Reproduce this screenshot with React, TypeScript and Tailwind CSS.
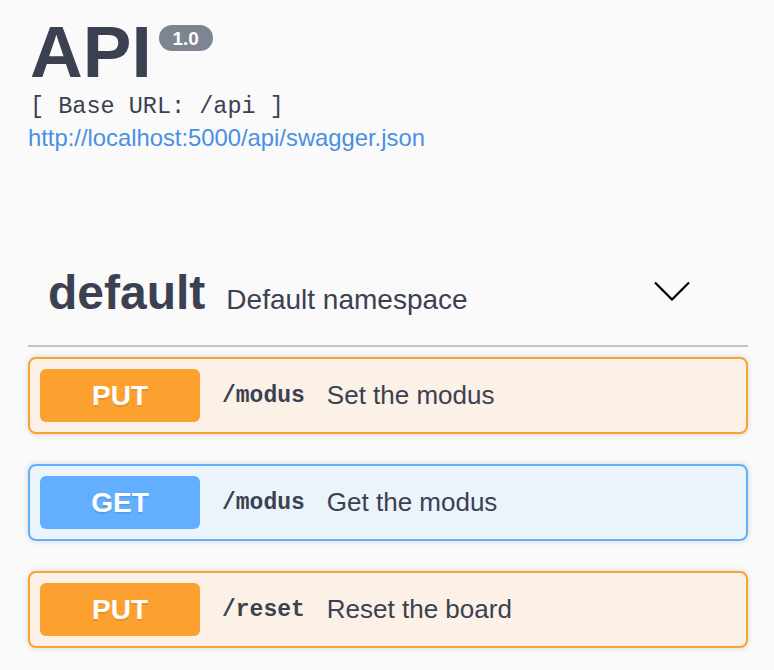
import React from "react"

type Op = {
  method: "PUT" | "GET"
  path: string
  summary: string
}

const ops: Op[] = [
  { method: "PUT", path: "/modus", summary: "Set the modus" },
  { method: "GET", path: "/modus", summary: "Get the modus" },
  { method: "PUT", path: "/reset", summary: "Reset the board" },
]

function blockClass(method: Op["method"]): string {
  if (method === "GET") {
    return "border-[#61affe] bg-[#ebf3fb]"
  }
  return "border-[#fca130] bg-[#fbf1e6]"
}

function badgeClass(method: Op["method"]): string {
  if (method === "GET") {
    return "bg-[#61affe]"
  }
  return "bg-[#fca130]"
}

function ChevronDown(): React.JSX.Element {
  return (
    <svg width="36" height="20" viewBox="0 0 36 20" fill="none" aria-hidden="true">
      <path d="M1 1.5 18 18.5 35 1.5" stroke="#000" strokeWidth="2.2" />
    </svg>
  )
}

function OpBlock({ op }: { op: Op }): React.JSX.Element {
  return (
    <div className={`mb-[30px] flex items-center rounded-[8px] border-2 p-[10px] shadow-[0_0_6px_rgba(0,0,0,0.15)] ${blockClass(op.method)}`}>
      <span
        className={`flex h-[53px] w-[160px] items-center justify-center rounded-[6px] text-[28px] font-bold text-white [text-shadow:0_2px_0_rgba(0,0,0,0.1)] ${badgeClass(op.method)}`}
      >
        {op.method}
      </span>
      <span className="ml-[22px] font-['Liberation_Mono',monospace] text-[23px] font-bold text-[#3b4151]">{op.path}</span>
      <span className="ml-[22px] text-[26px] text-[#3b4151]">{op.summary}</span>
    </div>
  )
}

export default function App(): React.JSX.Element {
  return (
    <div className="min-h-[670px] bg-[#fafafa] pl-[28px] pr-[26px] font-['Liberation_Sans',Arial,sans-serif] text-[#3b4151]">
      <div className="pl-[2px] pt-[15px]">
        <div className="flex items-start">
          <h1 className="text-[73px] font-bold leading-none text-[#3b4151]">API</h1>
          <span className="ml-[7px] mt-[10px] flex h-[26px] w-[54px] items-center justify-center rounded-full bg-[#7d8492] text-[19px] font-bold leading-none text-white">
            1.0
          </span>
        </div>
        <pre className="mt-[7px] font-['Liberation_Mono',monospace] text-[23.5px] leading-none text-[#3b4151]">[ Base URL: /api ]</pre>
        <a className="-ml-[2px] mt-[7px] block text-[23.8px] leading-none text-[#4990e2]" href="#">
          http://localhost:5000/api/swagger.json
        </a>
      </div>

      <div className="mt-[110px]">
        <div className="flex items-start border-b-2 border-[#c4c5c8] pb-[28px] pl-[20px] pt-[10px]">
          <div className="flex items-baseline">
            <span className="text-[48px] font-bold leading-none">default</span>
            <span className="ml-[21px] text-[28px] leading-none">Default namespace</span>
          </div>
          <span className="ml-auto mr-[58px] mt-[12px]">
            <ChevronDown />
          </span>
        </div>
        <div className="mt-[10px]">
          {ops.map((op, i) => (
            <OpBlock key={i} op={op} />
          ))}
        </div>
      </div>
    </div>
  )
}
